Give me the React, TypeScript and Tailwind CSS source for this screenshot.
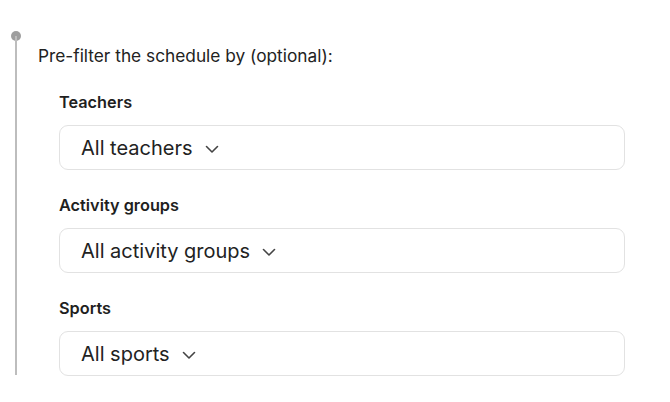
import React from "react";

function Chevron() {
  return (
    <svg width="16" height="16" viewBox="0 0 16 16" fill="none" className="ml-[11px] mt-[2px]">
      <path d="M2.5 5.5 L8 11 L13.5 5.5" stroke="#444" strokeWidth="1.6" strokeLinecap="round" strokeLinejoin="round" />
    </svg>
  );
}

function Field({ label, value }: { label: string; value: string }) {
  return (
    <div className="flex flex-col">
      <div className="text-[16.3px] font-semibold text-[#1f1f1f] leading-[20px]">{label}</div>
      <div className="mt-[13px] h-[45px] w-[566px] rounded-[9px] border border-[#e2e2e2] flex items-center pl-[21px]">
        <span className="text-[20px] text-[#222] leading-[24px]">{value}</span>
        <Chevron />
      </div>
    </div>
  );
}

export default function App() {
  return (
    <div
      className="w-[670px] h-[402px] bg-white relative"
      style={{ fontFamily: "Inter, 'Noto Sans', sans-serif" }}
    >
      <div className="flex pt-[31px] pl-[11px]">
        <div className="flex flex-col items-center w-[10px]">
          <div className="w-[10px] h-[10px] rounded-full bg-[#9e9e9e]" />
          <div className="w-[2px] h-[339px] bg-[#bdbdbd] -mt-[5px]" />
        </div>
        <div className="ml-[17px] flex flex-col">
          <div className="mt-[15px] text-[17.3px] text-[#222] leading-[20px]">Pre-filter the schedule by (optional):</div>
          <div className="ml-[21px] mt-[26px] flex flex-col gap-[25px]">
            <Field label="Teachers" value="All teachers" />
            <Field label="Activity groups" value="All activity groups" />
            <Field label="Sports" value="All sports" />
          </div>
        </div>
      </div>
    </div>
  );
}
